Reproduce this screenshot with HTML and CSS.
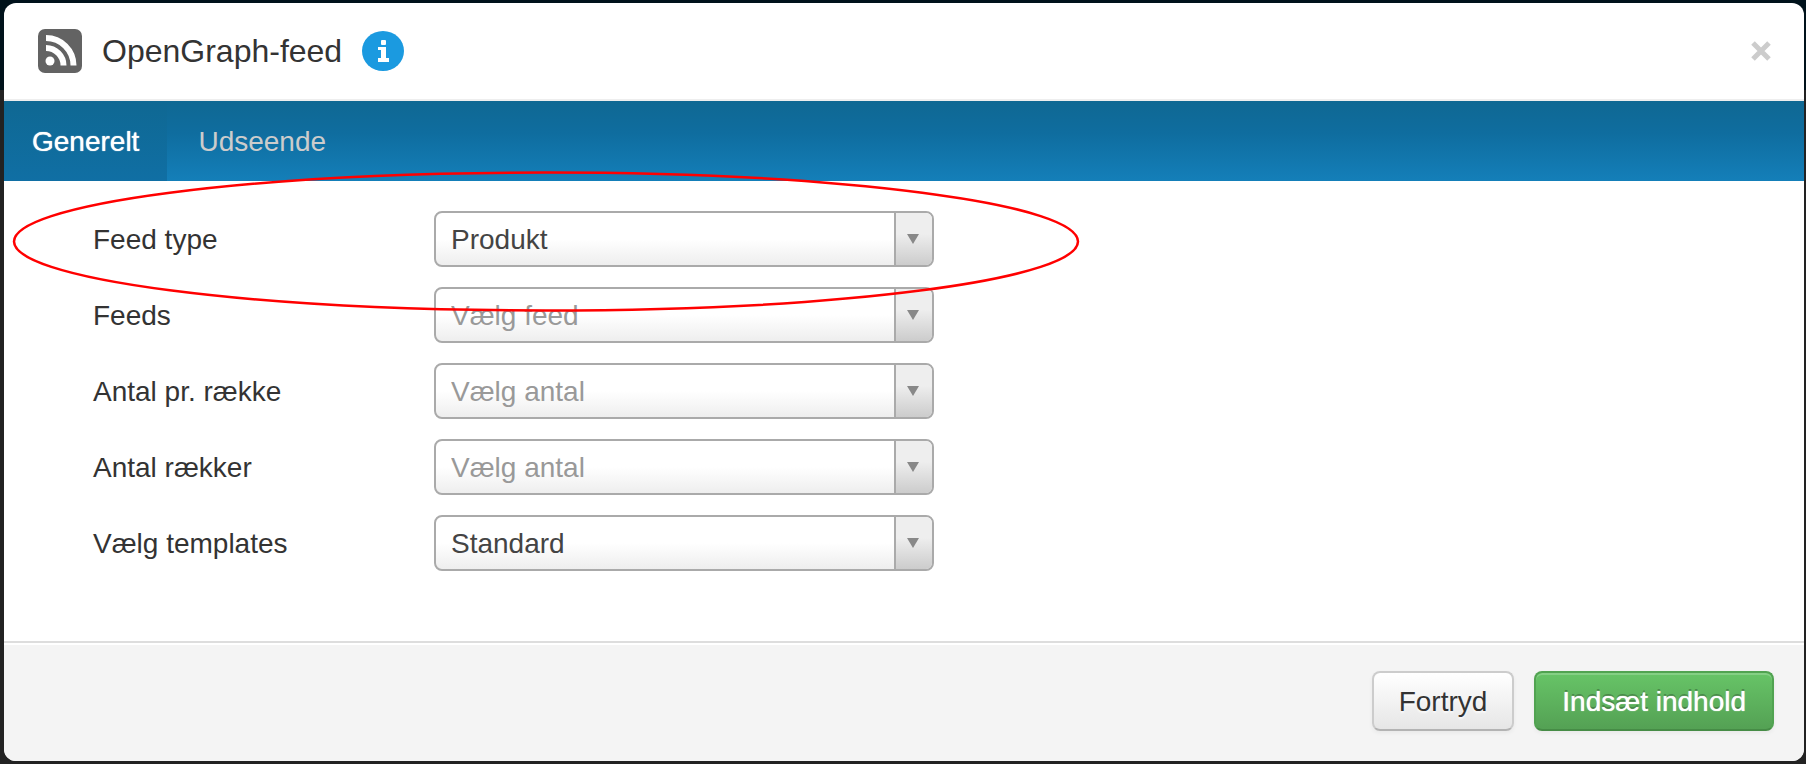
FILE: index.html
```html
<!DOCTYPE html>
<html lang="da">
<head>
    <meta charset="UTF-8">
    <title>OpenGraph-feed</title>
    <link rel="stylesheet" href="styles.css">
</head>
<body>
    <div class="modal">
        <div class="modal-header">
            <svg class="feed-icon" width="44" height="44" viewBox="0 0 44 44">
                <rect width="44" height="44" rx="7" fill="#636363" />
                <circle cx="12" cy="32" r="4.500" fill="#fff" />
                <path d="M8,19 A17.500,17.500 0 0 1 25.500,36.500" fill="none" stroke="#fff" stroke-width="6" />
                <path d="M8,9 A27.500,27.500 0 0 1 35.500,36.500" fill="none" stroke="#fff" stroke-width="6" />
            </svg>
            <h1>OpenGraph-feed</h1>
            <a href="#" class="info" aria-label="Info">
                <svg width="42" height="40" viewBox="0 0 42 40">
                    <ellipse cx="21" cy="20" rx="21" ry="20" fill="#1b9ae0" />
                    <rect x="19" y="9" width="5" height="5" rx="1" fill="#fff" />
                    <path d="M16,16 H24 V27 H27 V31 H16 V27 H19 V19 H16 Z" fill="#fff" />
                </svg>
            </a>
            <button type="button" class="close" aria-label="Luk">
                <svg width="20" height="20" viewBox="0 0 20 20">
                    <path d="M2,2 L18,18 M18,2 L2,18" stroke="#ccc" stroke-width="5" />
                </svg>
            </button>
        </div>
        <nav class="tabs">
            <a href="#" class="active">Generelt</a>
            <a href="#">Udseende</a>
        </nav>
        <form class="modal-body">
            <div class="row">
                <label for="type">Feed type</label>
                <div class="select">
                    <select id="type"><option>Produkt</option></select>
                </div>
            </div>
            <div class="row">
                <label for="feeds">Feeds</label>
                <div class="select">
                    <select id="feeds" class="empty"><option>Vælg feed</option></select>
                </div>
            </div>
            <div class="row">
                <label for="columns">Antal pr. række</label>
                <div class="select">
                    <select id="columns" class="empty"><option>Vælg antal</option></select>
                </div>
            </div>
            <div class="row">
                <label for="rows">Antal rækker</label>
                <div class="select">
                    <select id="rows" class="empty"><option>Vælg antal</option></select>
                </div>
            </div>
            <div class="row">
                <label for="template">Vælg templates</label>
                <div class="select">
                    <select id="template"><option>Standard</option></select>
                </div>
            </div>
            <!-- Markering af feed type -->
            <svg class="marker" width="1068" height="142" viewBox="0 0 1068 142">
                <ellipse cx="534" cy="71.500" rx="532" ry="69" fill="none" stroke="#f00" stroke-width="2.500" />
            </svg>
        </form>
        <div class="modal-footer">
            <button type="button" class="btn">Fortryd</button>
            <button type="button" class="btn btn-success">Indsæt indhold</button>
        </div>
    </div>
</body>
</html>
```

FILE: styles.css
```css
* {
    box-sizing: border-box;
}
body {
    margin: 0;
    padding: 3px 2px 3px 4px;
    font-family: "Liberation Sans", Arial, sans-serif;
    font-size: 28px;
    line-height: 40px;
    color: #333;
    background: linear-gradient(#00121b 90px, #222 90px);
}
.modal {
    background: #fff;
    border-radius: 12px;
    overflow: hidden;
}
.modal-header {
    display: flex;
    align-items: center;
    height: 98px;
    padding: 0 33px 0 34px;
    border-bottom: 2px solid #eee;
}
.modal-header h1 {
    margin: 0 20px;
    font-size: 32px;
    font-weight: normal;
}
.modal-header svg {
    display: block;
}
.close {
    margin-left: auto;
    padding: 0;
    border: 0;
    background: none;
}
.tabs {
    display: flex;
    background: linear-gradient(#0f6893, #0f6d9f 40%, #147fb9);
}
.tabs a {
    padding: 21px 31px 19px;
    color: #ccc;
    text-decoration: none;
}
.tabs a.active {
    padding: 21px 28px 19px;
    color: #fff;
    text-shadow: 0 0 1px #fff;
    background: linear-gradient(#0f6893, #106fa4);
}
.modal-body {
    position: relative;
    padding: 30px 89px 50px;
}
.row {
    display: flex;
    align-items: center;
    margin-bottom: 20px;
}
.row label {
    width: 341px;
    padding-top: 1px;
}
.select {
    position: relative;
    width: 500px;
}
.select select {
    display: block;
    width: 100%;
    height: 56px;
    padding: 1px 50px 0 15px;
    appearance: none;
    border: 2px solid #aaa;
    border-radius: 8px;
    background: linear-gradient(#fff 50%, #eee);
    color: #444;
    font: inherit;
}
.select select.empty {
    color: #999;
}
/* arrow box */
.select::before {
    content: "";
    position: absolute;
    top: 2px;
    right: 2px;
    bottom: 2px;
    width: 36px;
    border-left: 2px solid #aaa;
    border-radius: 0 6px 6px 0;
    background: linear-gradient(#eee 40%, #ccc);
    pointer-events: none;
}
.select::after {
    content: "";
    position: absolute;
    top: 23px;
    right: 15px;
    border: 6px solid transparent;
    border-top: 10px solid #888;
    border-bottom: 0;
    pointer-events: none;
}
.marker {
    position: absolute;
    top: -11px;
    left: 8px;
    pointer-events: none;
}
.modal-footer {
    display: flex;
    justify-content: flex-end;
    gap: 20px;
    padding: 28px 30px 30px;
    border-top: 2px solid #ddd;
    background: #f4f4f4;
    box-shadow: inset 0 2px 0 #fff;
}
.btn {
    height: 60px;
    padding: 1px 25px 0;
    border: 2px solid #ccc;
    border-bottom-color: #b3b3b3;
    border-radius: 8px;
    background: linear-gradient(#fff, #e6e6e6);
    box-shadow: 0 2px 4px rgba(0, 0, 0, 0.05);
    color: #333;
    font: inherit;
    text-shadow: 0 2px 2px rgba(255, 255, 255, 0.75);
}
.btn-success {
    padding: 1px 26px 0;
    border-color: #51a351 #51a351 #468c46;
    background: linear-gradient(#67c467, #54a154);
    box-shadow: inset 0 2px 0 rgba(255, 255, 255, 0.2), 0 2px 4px rgba(0, 0, 0, 0.05);
    color: #fff;
    text-shadow: 0 0 1px #fff, 0 -2px 0 rgba(0, 0, 0, 0.25);
}
```
